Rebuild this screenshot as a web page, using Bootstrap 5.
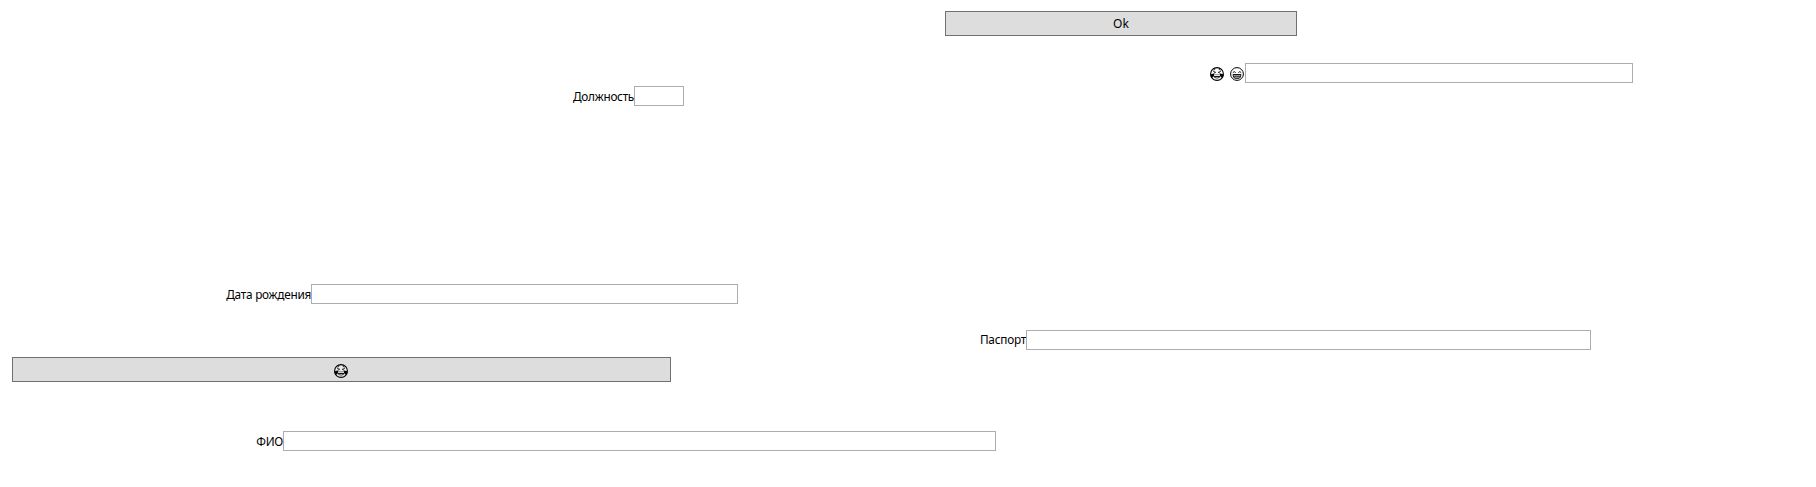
<!DOCTYPE html>
<html lang="ru">
<head>
<meta charset="utf-8">
<title>Форма</title>
<link href="https://cdn.jsdelivr.net/npm/bootstrap@5.3.0/dist/css/bootstrap.min.css" rel="stylesheet">
<style>
body{background:#fff;color:#000;font:11.8px/17px "Noto Sans","Open Sans",sans-serif;height:487px;overflow:hidden}
.btn.win{--bs-btn-bg:#ddd;--bs-btn-border-color:#707070;--bs-btn-color:#000;--bs-btn-hover-bg:#ddd;--bs-btn-hover-color:#000;--bs-btn-border-radius:0;height:25px;padding:0;font-size:12px;line-height:17px}
.form-control.win{border:1px solid #abadb3;border-radius:0;height:20px;min-height:20px;padding:0 3px;font-size:12px;flex:none}
.line{height:20px}
.line label{flex:none;text-align:right;white-space:nowrap;height:17px;margin-top:2px}
.face{width:14px;height:14px;display:block;flex:none}
.ok{width:352px;margin:11px 0 0 945px}
.r-faces{margin-top:27px}.line.r-faces label{width:1245px;margin-top:4px;padding-right:1px}.r-faces input{width:388px}
.r-post{margin-top:3px}.r-post label{width:634px;letter-spacing:-.28px}.r-post input{width:50px}
.r-birth{margin-top:178px}.r-birth label{width:311px;letter-spacing:-.26px}.r-birth input{width:427px}
.r-pass{margin-top:26px}.line.r-pass label{width:1026px;margin-top:1px;letter-spacing:-.24px}.r-pass input{width:565px}
.btn.joy{width:659px;margin:7px 0 0 12px;padding:2px 1px 0 0}
.r-name{margin-top:49px}.r-name label{width:283px;letter-spacing:-.3px}.r-name input{width:713px}
</style>
</head>
<body>
<svg class="d-none">
<symbol id="laugh" viewBox="0 0 14 14">
<circle cx="7" cy="7" r="6.4" fill="#fff" fill-opacity=".4" stroke="#000" stroke-width="1.1"/>
<path d="M3.2 4.4 5.7 5.3 3.6 6.4M10.8 4.4 8.3 5.3l2.1 1.1M3.4 3.2l1.8-.9M10.6 3.2l-1.8-.9" fill="none" stroke="#000" stroke-width=".8"/>
<path d="M.2 8Q1.8 6.2 4 6.8 4.4 9.6 2.9 10.6 .8 10.6.2 8ZM13.8 8Q12.2 6.2 10 6.8 9.6 9.6 11.1 10.6 13.2 10.6 13.8 8Z"/>
<path d="M4 7.7h6" stroke="#444" stroke-width=".6"/>
<path d="M3.6 8.9h6.8Q9.8 11.4 7 11.5 4.2 11.4 3.6 8.9Z" fill="#111"/>
<path d="M4.7 10.4Q7 9.6 9.3 10.4 7 12 4.7 10.4Z" fill="#aaa"/>
</symbol>
<symbol id="grin" viewBox="0 0 14 14">
<circle cx="7" cy="7" r="6.4" fill="#fff" stroke="#000" stroke-width="1"/>
<path d="M2.8 5.6Q4.2 3.7 5.7 5.6M8.3 5.6Q9.8 3.7 11.2 5.6" fill="none" stroke="#000" stroke-width=".9"/>
<path d="M3 7.5h8Q11 11.1 8.6 11.4H5.4Q3 11.1 3 7.5Z" fill="#fff" stroke="#000" stroke-width=".9"/>
<path d="M3.2 9.3h7.6M5.1 7.5v3.8M7 7.5v3.8M8.9 7.5v3.8" stroke="#000" stroke-width=".65"/>
</symbol>
</svg>
<form class="d-flex flex-column">
<button type="button" class="btn win ok">Ok</button>
<div class="line d-flex r-faces"><label class="d-flex justify-content-end" for="f1"><svg class="face" style="margin-right:6px"><use href="#laugh"/></svg><svg class="face"><use href="#grin"/></svg></label><input id="f1" class="form-control win"></div>
<div class="line d-flex r-post"><label for="f2">Должность</label><input id="f2" class="form-control win"></div>
<div class="line d-flex r-birth"><label for="f3">Дата рождения</label><input id="f3" class="form-control win"></div>
<div class="line d-flex r-pass"><label for="f4">Паспорт</label><input id="f4" class="form-control win"></div>
<button type="button" class="btn win joy d-flex align-items-center justify-content-center" aria-label="Смех"><svg class="face"><use href="#laugh"/></svg></button>
<div class="line d-flex r-name"><label for="f5">ФИО</label><input id="f5" class="form-control win"></div>
</form>
<script src="https://cdn.jsdelivr.net/npm/bootstrap@5.3.0/dist/js/bootstrap.bundle.min.js"></script>
</body>
</html>
